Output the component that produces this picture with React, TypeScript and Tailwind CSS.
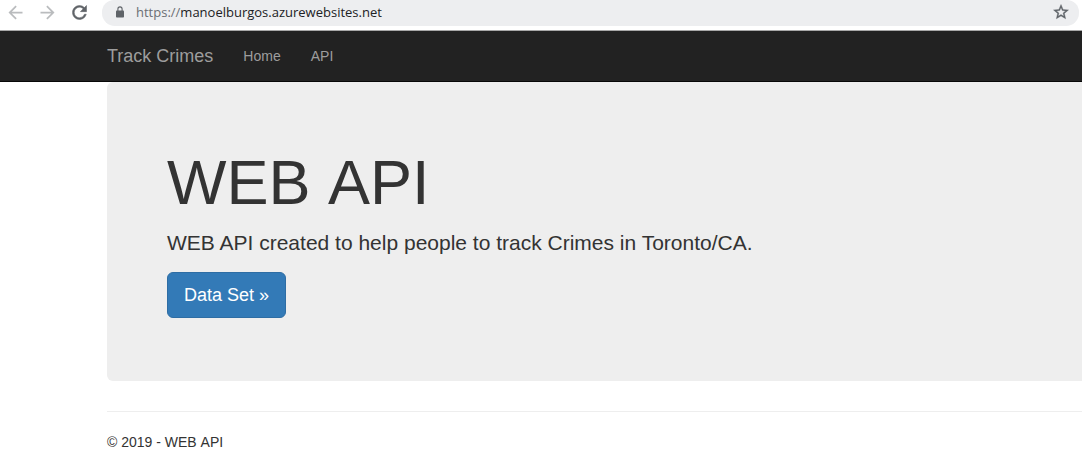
import { MdArrowBack, MdArrowForward } from "react-icons/md";

function ReloadIcon() {
  return (
    <svg width="21" height="21" viewBox="0 0 24 24" fill="currentColor" stroke="currentColor" strokeWidth="0.6" aria-hidden="true">
      <path d="M17.65 6.35A7.958 7.958 0 0 0 12 4c-4.42 0-7.99 3.58-7.99 8s3.57 8 7.99 8c3.73 0 6.84-2.55 7.73-6h-2.08A5.99 5.99 0 0 1 12 18c-3.31 0-6-2.69-6-6s2.69-6 6-6c1.66 0 3.14.69 4.22 1.78L13 11h7V4l-2.35 2.35z" />
    </svg>
  );
}

function StarIcon() {
  return (
    <svg width="18" height="18" viewBox="0 0 24 24" fill="currentColor" stroke="currentColor" strokeWidth="0.5" aria-hidden="true">
      <path d="m22 9.24-7.19-.62L12 2 9.19 8.63 2 9.24l5.46 4.73L5.82 21 12 17.27 18.18 21l-1.63-7.03L22 9.24zM12 15.4l-3.76 2.27 1-4.28-3.32-2.88 4.38-.38L12 6.1l1.71 4.04 4.38.38-3.32 2.88 1 4.28L12 15.4z" />
    </svg>
  );
}

function LockIcon() {
  return (
    <svg width="8" height="12" viewBox="0 0 8 12" aria-hidden="true" className="shrink-0 text-[#5f6368]">
      <rect x="0" y="4.5" width="8" height="7" rx="0.8" fill="currentColor" />
      <path d="M1.9 5V3a2.1 2.1 0 0 1 4.2 0v2" fill="none" stroke="currentColor" strokeWidth="1.1" />
    </svg>
  );
}

function BrowserBar() {
  return (
    <div className="flex h-[31px] items-start border-b border-[#a8a8a8] bg-white pr-[3px]">
      <div className="flex h-6 w-[102px] shrink-0 items-center gap-[11px] pl-[5px]">
        <button type="button" aria-label="Back" className="text-[#babcbe]">
          <MdArrowBack size={21} />
        </button>
        <button type="button" aria-label="Forward" className="text-[#babcbe]">
          <MdArrowForward size={21} />
        </button>
        <button type="button" aria-label="Reload" className="text-[#5f6368]">
          <ReloadIcon />
        </button>
      </div>
      <div className="flex h-[26px] grow items-center rounded-b-[13px] rounded-t-xl bg-[#edeef0] pb-[2px] pl-[14px] pr-[9px]">
        <LockIcon />
        <span className="ml-3 grow font-['Open_Sans','Noto_Sans',sans-serif] text-[13px] leading-5 text-[#202124]">
          <span className="text-[#6b6f74]">https://</span>manoelburgos.azurewebsites.net
        </span>
        <button type="button" aria-label="Bookmark this page" className="text-[#5f6368]">
          <StarIcon />
        </button>
      </div>
    </div>
  );
}

export default function App() {
  return (
    <div className="overflow-x-hidden bg-white font-['Liberation_Sans',Arial,sans-serif] text-sm leading-5 text-[#333333]">
      <BrowserBar />
      <nav className="flex h-[51px] items-center border-b border-[#080808] bg-[#222222] pl-[107px] text-[#9d9d9d]">
        <a href="#" className="mr-[15px] text-lg leading-5">
          Track Crimes
        </a>
        <a href="#home" className="px-[15px]">
          Home
        </a>
        <a href="#api" className="px-[15px]">
          API
        </a>
      </nav>
      <main className="pl-[107px]">
        <section className="rounded-l-md bg-[#eeeeee] px-[60px] pb-[63px] pt-[66px]">
          <h1 className="mb-[11px] text-[63px] font-medium leading-[69px] [font-kerning:none]">WEB API</h1>
          <p className="mb-[15px] text-[21px] leading-[29px]">
            WEB API created to help people to track Crimes in Toronto/CA.
          </p>
          <a
            href="#data"
            className="flex h-[46px] w-fit items-center rounded-md border border-[#2e6da4] bg-[#337ab7] px-4 text-lg leading-6 text-white"
          >
            Data Set »
          </a>
        </section>
        <hr className="mb-5 mt-[30px] border-t border-[#eeeeee]" />
        <footer>
          <p className="mb-[10px] [font-kerning:none]">© 2019 - WEB API</p>
        </footer>
      </main>
    </div>
  );
}
